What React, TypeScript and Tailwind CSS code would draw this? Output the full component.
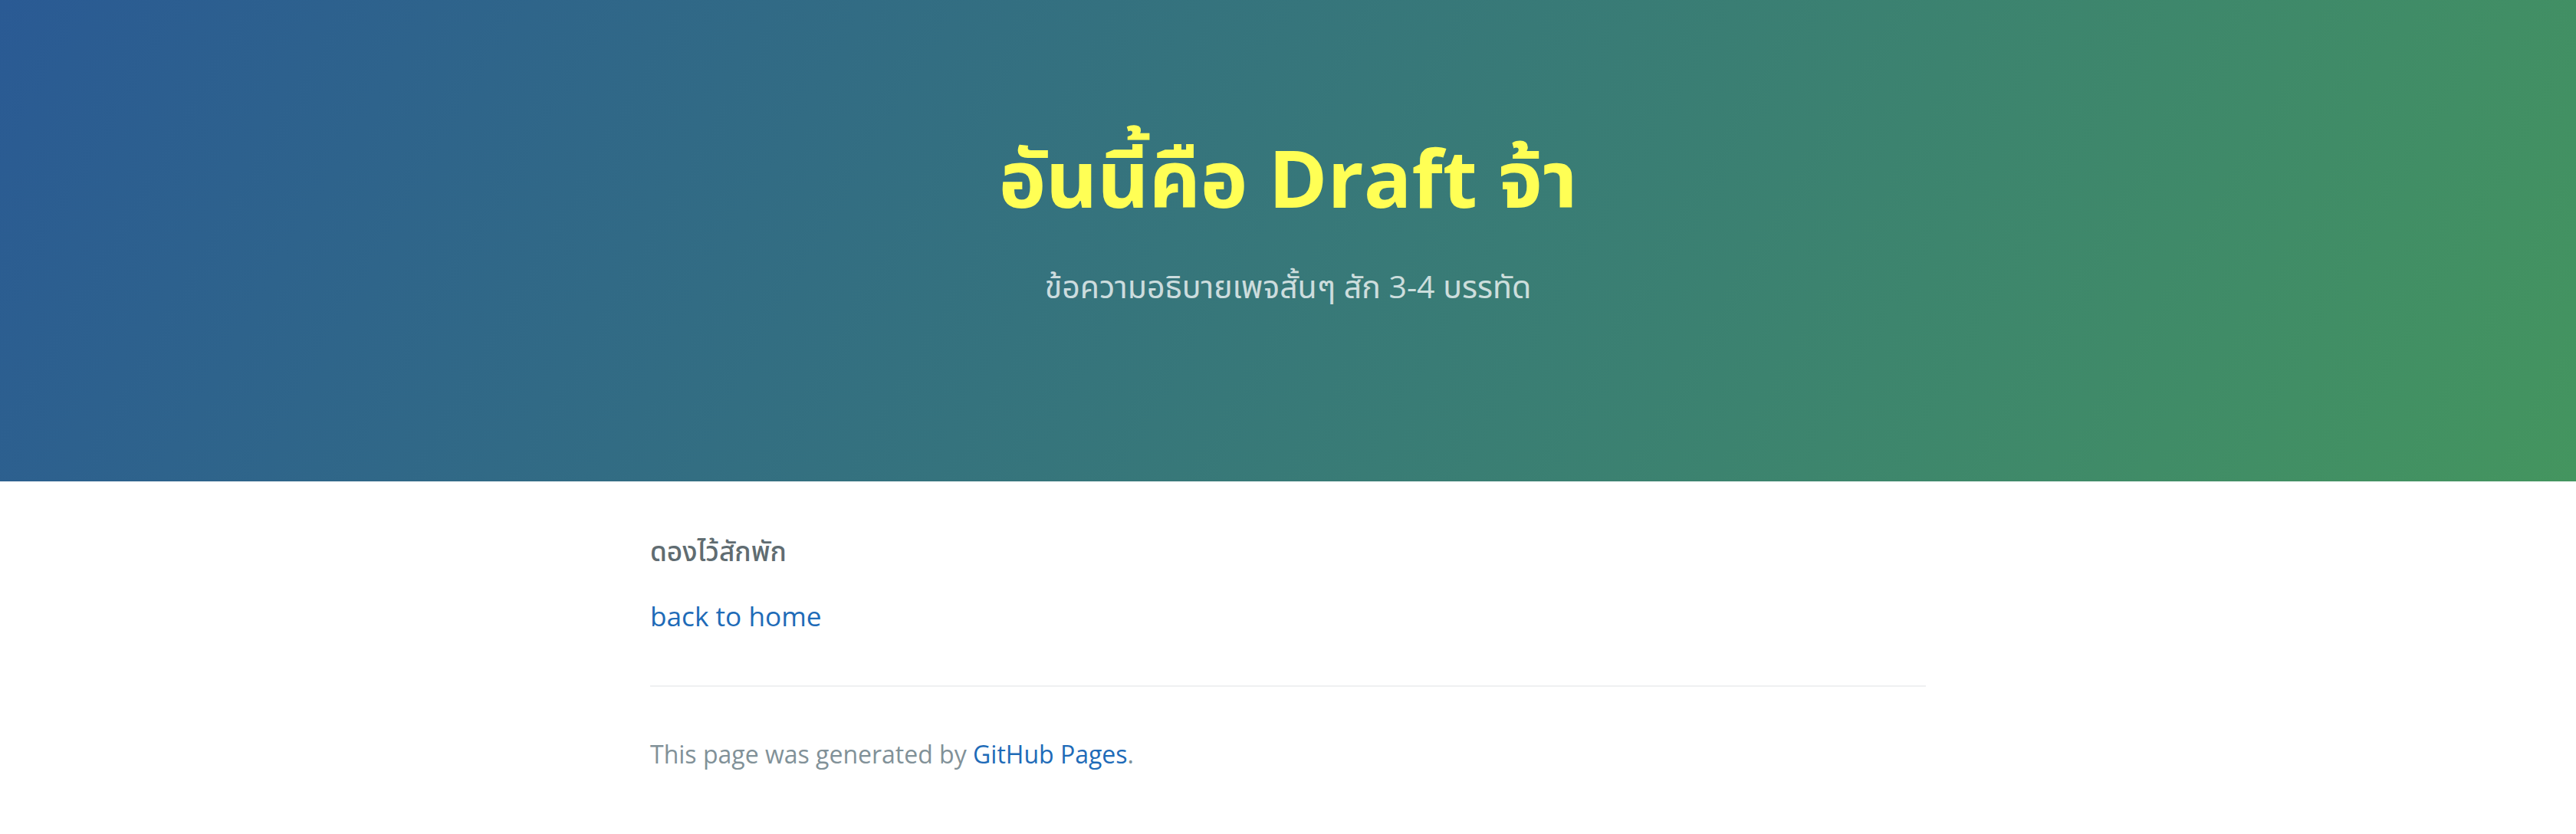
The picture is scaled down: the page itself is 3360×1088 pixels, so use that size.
import React from 'react';

const App: React.FC = () => {
  return (
    <div className="min-h-screen bg-white text-[#606c71] font-['Open_Sans','Noto_Sans_Thai','Noto_Sans',sans-serif] text-[32px] leading-[1.5]">
      {/* Header */}
      <section className="bg-[linear-gradient(120deg,#2a5a94,#44955f)] text-center pt-[153px] px-[192px] h-[628px]">
        <h1 className="text-[104px] leading-[156px] font-bold text-[#ffff55] mb-[3px]">
          อันนี้คือ Draft จ้า
        </h1>
        <h2 className="text-[41px] leading-[60px] font-normal text-white opacity-75 mt-[34px]">
          ข้อความอธิบายเพจสั้นๆ สัก 3-4 บรรทัด
        </h2>
      </section>

      {/* Main content */}
      <main className="max-w-[2048px] mx-auto px-[192px] pt-[64px] pb-[64px] text-[35.2px] leading-[52.8px]">
        <p className="mb-[32px] font-medium">ดองไว้สักพัก</p>
        <p>
          <a href="#" className="text-[#1e6bb8]">back to home</a>
        </p>

        <footer className="mt-[64px] pt-[64px] border-t-2 border-[#eff0f1] text-[32px] leading-[48px]">
          <span className="text-[#819198]">
            This page was generated by <a href="#" className="text-[#1e6bb8]">GitHub Pages</a>.
          </span>
        </footer>
      </main>
    </div>
  );
};

export default App;
